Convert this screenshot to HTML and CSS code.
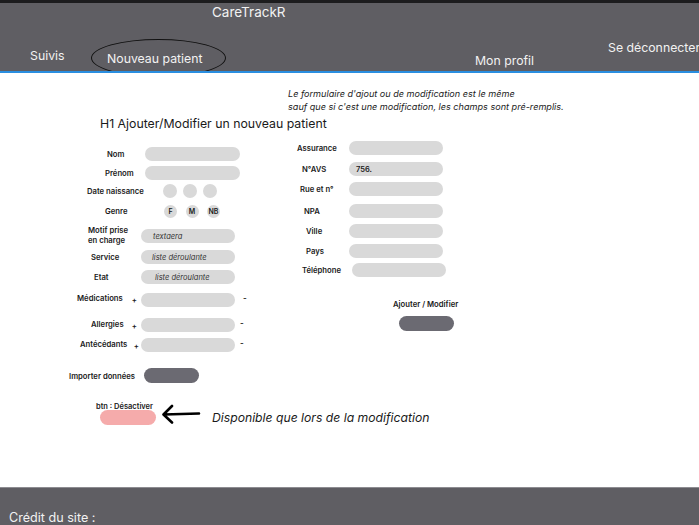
FILE: index.html
```html
<!DOCTYPE html>
<html lang="fr">
<head>
<meta charset="utf-8">
<title>CareTrackR</title>
<link rel="stylesheet" href="styles.css">
</head>
<body>
<header class="topbar">
  <div class="bar">
    <div class="brand">CareTrackR</div>
    <nav class="nav">
      <a class="nav-item suivis">Suivis</a>
      <a class="nav-item nouveau">Nouveau patient<span class="ring"></span></a>
      <a class="nav-item profil">Mon profil</a>
      <a class="nav-item logout">Se déconnecter</a>
    </nav>
  </div>
  <div class="accent"></div>
</header>

<main class="main">
  <p class="note">Le formulaire d'ajout ou de modification est le même<br>sauf que si c'est une modification, les champs sont pré-remplis.</p>
  <h1 class="title">H1 Ajouter/Modifier un nouveau patient</h1>

  <div class="form">
    <div class="col-left">
      <div class="row r-nom"><span class="lbl">Nom</span><span class="pill wide"></span></div>
      <div class="row r-prenom"><span class="lbl">Prénom</span><span class="pill wide"></span></div>
      <div class="row r-date"><span class="lbl">Date naissance</span>
        <span class="dots"><span class="dot"></span><span class="dot"></span><span class="dot"></span></span>
      </div>
      <div class="row r-genre"><span class="lbl">Genre</span>
        <span class="chips"><span class="chip">F</span><span class="chip">M</span><span class="chip">NB</span></span>
      </div>
      <div class="row r-motif"><span class="lbl">Motif prise<br>en charge</span><span class="pill"><span class="ph">textaera</span></span></div>
      <div class="row r-service"><span class="lbl">Service</span><span class="pill"><span class="ph">liste déroulante</span></span></div>
      <div class="row r-etat"><span class="lbl">Etat</span><span class="pill"><span class="ph">liste déroulante</span></span></div>
      <div class="row r-med"><span class="lbl lbl-plus"><span>Médications</span><span class="plus">+</span></span><span class="pill"></span><span class="minus">-</span></div>
      <div class="row r-all"><span class="lbl lbl-plus"><span>Allergies</span><span class="plus">+</span></span><span class="pill"></span><span class="minus">-</span></div>
      <div class="row r-ant"><span class="lbl lbl-plus"><span>Antécédants</span><span class="plus">+</span></span><span class="pill"></span><span class="minus">-</span></div>
      <div class="row r-imp"><span class="lbl">Importer données</span><span class="btn-dark"></span></div>

      <div class="disable">
        <div class="disable-lbl">btn : Désactiver</div>
        <div class="disable-row">
          <span class="btn-pink"></span>
          <svg class="arrow" width="40" height="20" viewBox="0 0 40 20" aria-hidden="true">
            <path d="M38 9.5 L3 10.5 M11 2 L2.5 10.5 L11 18.5" fill="none" stroke="#000" stroke-width="2.6" stroke-linecap="round" stroke-linejoin="round"/>
          </svg>
          <span class="dispo">Disponible que lors de la modification</span>
        </div>
      </div>
    </div>

    <div class="col-right">
      <div class="row q-ass"><span class="lbl">Assurance</span><span class="pill"></span></div>
      <div class="row q-avs"><span class="lbl">N°AVS</span><span class="pill"><span class="val">756.</span></span></div>
      <div class="row q-rue"><span class="lbl">Rue et n°</span><span class="pill"></span></div>
      <div class="row q-npa"><span class="lbl">NPA</span><span class="pill"></span></div>
      <div class="row q-ville"><span class="lbl">Ville</span><span class="pill"></span></div>
      <div class="row q-pays"><span class="lbl">Pays</span><span class="pill"></span></div>
      <div class="row q-tel"><span class="lbl">Téléphone</span><span class="pill"></span></div>
      <div class="submit-lbl">Ajouter / Modifier</div>
      <span class="btn-dark submit"></span>
    </div>
  </div>
</main>

<footer class="footer">Crédit du site :</footer>
</body>
</html>
```

FILE: styles.css
```css
* { box-sizing: border-box; }

html, body {
  margin: 0;
  padding: 0;
}

body {
  width: 699px;
  height: 525px;
  overflow: hidden;
  background: #ffffff;
  font-family: Inter, "Noto Sans", "Liberation Sans", sans-serif;
  color: #1a1a1a;
}

/* ---------- header ---------- */
.topbar {
  border-top: 3px solid #1c1c1e;
}

.bar {
  position: relative;
  height: 68px;
  background: #5f5e63;
  overflow: hidden;
  color: #f2f2f2;
}

.brand {
  margin-top: 1px;
  padding-left: 212px;
  font-size: 13.5px;
  line-height: 16px;
}

.nav {
  display: flex;
  align-items: flex-start;
  font-size: 12.3px;
  line-height: 16px;
}

.nav-item {
  position: relative;
  flex: none;
  white-space: nowrap;
  color: #f2f2f2;
}

.suivis { margin-left: 30px; width: 77px; margin-top: 28px; }
.nouveau { width: 368px; margin-top: 31px; }
.profil { width: 133px; margin-top: 33px; }
.logout { margin-top: 20px; }

.ring {
  position: absolute;
  left: -16px;
  top: -12px;
  width: 135px;
  height: 38px;
  border: 1.6px solid #111;
  border-radius: 50%;
}

.accent {
  height: 2px;
  background: #2a8ee0;
}

/* ---------- main ---------- */
.main {
  height: 414px;
}

.note {
  margin: 0 0 0 288px;
  padding-top: 14px;
  font-size: 9.1px;
  line-height: 13px;
  font-style: italic;
  color: #222;
}

.title {
  margin: 3px 0 0 100px;
  font-size: 12.3px;
  line-height: 16px;
  font-weight: 400;
  color: #1a1a1a;
}

.form {
  display: flex;
  align-items: flex-start;
  margin-top: 9px;
}

.col-left {
  width: 228px;
  margin-left: 69px;
  padding-top: 6px;
}

.col-right {
  width: 200px;
}

.row {
  display: flex;
  align-items: center;
  min-height: 14px;
}

.lbl {
  flex: none;
  padding-top: 2px;
  font-size: 7.7px;
  line-height: 10px;
  font-weight: 600;
  white-space: nowrap;
  color: #1a1a1a;
}

.pill {
  flex: none;
  display: flex;
  align-items: center;
  width: 94px;
  height: 14px;
  border-radius: 7px;
  background: #d9d9d9;
}

.pill.wide { width: 95px; }

.ph {
  font-size: 7.5px;
  font-style: italic;
  color: #333;
  padding-left: 12px;
}

.val {
  font-size: 7.5px;
  font-weight: 600;
  color: #1a1a1a;
  padding-left: 7px;
}

/* left rows */
.r-nom .lbl { width: 76px; padding-left: 38px; }
.r-prenom { margin-top: 5px; }
.r-prenom .lbl { width: 76px; padding-left: 36px; }

.r-date { margin-top: 4px; }
.r-date .lbl { width: 94px; padding-left: 18px; }

.dots { display: flex; gap: 6px; }
.dot {
  width: 14px;
  height: 14px;
  border-radius: 50%;
  background: #d9d9d9;
}

.r-genre { margin-top: 6px; }
.r-genre .lbl { width: 95px; padding-left: 36px; }

.chips { display: flex; gap: 8.5px; }
.chip {
  display: flex;
  align-items: center;
  justify-content: center;
  width: 13px;
  height: 13px;
  border-radius: 50%;
  background: #d9d9d9;
  font-size: 7px;
  font-weight: 600;
  color: #1a1a1a;
}

.r-motif { margin-top: 8px; }
.r-motif .lbl { width: 72px; padding-left: 19px; padding-top: 0; }

.r-service { margin-top: 4px; }
.r-service .lbl { width: 72px; padding-left: 22px; }
.r-service .ph { padding-left: 11px; }

.r-etat { margin-top: 6px; }
.r-etat .lbl { width: 72px; padding-left: 25px; }
.r-etat .ph { padding-left: 14px; }

.lbl-plus {
  display: flex;
  width: 72px;
}
.plus {
  margin-left: auto;
  padding-right: 4px;
  padding-top: 2px;
}
.minus {
  margin-left: 5px;
  font-size: 8px;
  font-weight: 600;
  margin-top: -4px;
}

.r-med { margin-top: 9px; }
.r-med .lbl { padding-left: 8px; padding-top: 0; }
.r-med .minus { margin-left: 8px; }

.r-all { margin-top: 11px; }
.r-all .lbl { padding-left: 22px; }

.r-ant { margin-top: 6px; }
.r-ant .lbl { padding-left: 11px; }
.r-ant .plus { padding-right: 2px; }

.r-imp { margin-top: 16px; }
.r-imp .lbl { width: 75px; }

.btn-dark {
  display: block;
  flex: none;
  width: 55px;
  height: 15px;
  border-radius: 8px;
  background: #6b6a72;
}

.disable { margin-top: 20px; }

.disable-lbl {
  margin-left: 27px;
  font-size: 7.5px;
  line-height: 8px;
  font-weight: 600;
}

.disable-row {
  display: flex;
  align-items: center;
  margin-top: -1px;
}

.btn-pink {
  flex: none;
  margin-left: 31px;
  width: 56px;
  height: 15px;
  border-radius: 8px;
  background: #f5abab;
}

.arrow {
  flex: none;
  margin-left: 5px;
  margin-top: -7px;
}

.dispo {
  margin-left: 11px;
  white-space: nowrap;
  font-size: 12.2px;
  font-style: italic;
  color: #1a1a1a;
}

/* right rows */
.col-right .lbl { width: 52px; }
.q-ass .lbl { padding-left: 0; }
.q-avs { margin-top: 7px; }
.q-avs .lbl { padding-left: 5px; }
.q-rue { margin-top: 6px; }
.q-rue .lbl { padding-left: 3px; }
.q-npa { margin-top: 8px; }
.q-npa .lbl { padding-left: 7px; }
.q-ville { margin-top: 6px; }
.q-ville .lbl { padding-left: 9px; }
.q-pays { margin-top: 6px; }
.q-pays .lbl { padding-left: 9px; }
.q-tel { margin-top: 5px; }
.col-right .q-tel .lbl { width: 55px; padding-left: 5px; }

.submit-lbl {
  margin-top: 23px;
  margin-left: 96px;
  font-size: 7.7px;
  line-height: 9px;
  font-weight: 600;
  white-space: nowrap;
}

.submit {
  margin-top: 7px;
  margin-left: 102px;
}

/* ---------- footer ---------- */
.footer {
  height: 38px;
  border-top: 1px solid #8d8c91;
  background: #5f5e63;
  color: #f2f2f2;
  font-size: 12.6px;
  line-height: 14px;
  padding: 23px 0 0 9px;
}
```
